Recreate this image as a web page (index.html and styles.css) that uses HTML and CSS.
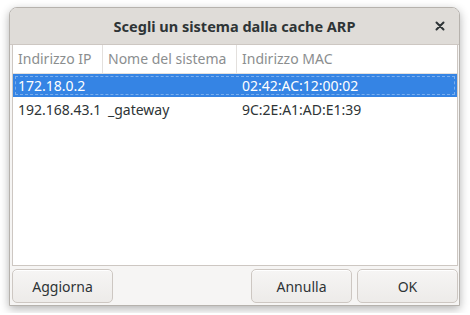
FILE: index.html
```html
<!DOCTYPE html>
<html lang="it">
<head>
    <meta charset="UTF-8">
    <title>Scegli un sistema dalla cache ARP</title>
    <link rel="stylesheet" href="styles.css">
</head>
<body>

    <div class="window">
        <div class="titlebar">
            <span class="title">Scegli un sistema dalla cache ARP</span>
            <span class="close">
                <svg width="10" height="10" viewBox="0 0 10 10">
                    <path d="M1.5 1.5 L8.5 8.5 M8.5 1.5 L1.5 8.5" stroke="#2e3436" stroke-width="2" stroke-linecap="round"/>
                </svg>
            </span>
        </div>

        <div class="content">
            <div class="tree">
                <div class="row header">
                    <div class="cell ip">Indirizzo IP</div>
                    <div class="cell name">Nome del sistema</div>
                    <div class="cell mac">Indirizzo MAC</div>
                </div>
                <div class="row selected">
                    <div class="cell ip">172.18.0.2</div>
                    <div class="cell name"></div>
                    <div class="cell mac">02:42:AC:12:00:02</div>
                </div>
                <div class="row">
                    <div class="cell ip">192.168.43.1</div>
                    <div class="cell name">_gateway</div>
                    <div class="cell mac">9C:2E:A1:AD:E1:39</div>
                </div>
            </div>

            <div class="buttons">
                <button class="btn">Aggiorna</button>
                <div class="spacer"></div>
                <button class="btn">Annulla</button>
                <button class="btn">OK</button>
            </div>
        </div>
    </div>

</body>
</html>
```

FILE: styles.css
```css
body {
    margin: 0;
    padding: 7px 9px;
    background-color: #ffffff;
    font-family: "Noto Sans", sans-serif;
    font-size: 14px;
    color: #2e3436;
}

.window {
    width: 451px;
    height: 299px;
    box-sizing: border-box;
    border: 1px solid #b6b2ad;
    border-radius: 8px 8px 0 0;
    background: #f6f5f4;
    box-shadow: 0 3px 10px rgba(0, 0, 0, 0.3);
    display: flex;
    flex-direction: column;
    overflow: hidden;
}

.titlebar {
    height: 36px;
    flex-shrink: 0;
    background: #dfdcd8;
    border-bottom: 1px solid #cdc7c2;
    display: flex;
    align-items: center;
    justify-content: center;
    position: relative;
}

.title {
    font-weight: bold;
    font-size: 14.5px;
    color: #2e3436;
}

.close {
    position: absolute;
    right: 14px;
    top: 13px;
    width: 10px;
    height: 10px;
    display: flex;
}

.content {
    flex: 1;
    display: flex;
    flex-direction: column;
    padding: 0 1px 2px 2px;
}

.tree {
    flex: 1;
    background: #ffffff;
    border: 1px solid #cdc7c2;
    border-top: none;
}

.row {
    display: flex;
    height: 24px;
    align-items: center;
}

.cell {
    padding: 0 5px;
    white-space: nowrap;
    box-sizing: border-box;
}

.ip {
    width: 90px;
}

.name {
    width: 134px;
}

.mac {
    flex: 1;
}

.header {
    height: 28px;
    color: #8b8e8f;
    border-bottom: 1px solid #e3e0dd;
}

.header .cell {
    height: 28px;
    line-height: 28px;
    border-right: 1px solid #e3e0dd;
}

.header .mac {
    border-right: none;
}

.selected {
    background: #3584e4;
    color: #ffffff;
    outline: 1px dashed rgba(255, 255, 255, 0.35);
    outline-offset: -3px;
    height: 23px;
}

.buttons {
    display: flex;
    gap: 5px;
    margin-top: 3px;
}

.spacer {
    flex: 1;
}

.btn {
    width: 101px;
    height: 34px;
    font-family: "Noto Sans", sans-serif;
    font-size: 14px;
    color: #2e3436;
    background: linear-gradient(#f6f5f4, #edebe9);
    border: 1px solid #cdc7c2;
    border-radius: 5px;
    box-shadow: inset 0 1px #ffffff;
}
```
